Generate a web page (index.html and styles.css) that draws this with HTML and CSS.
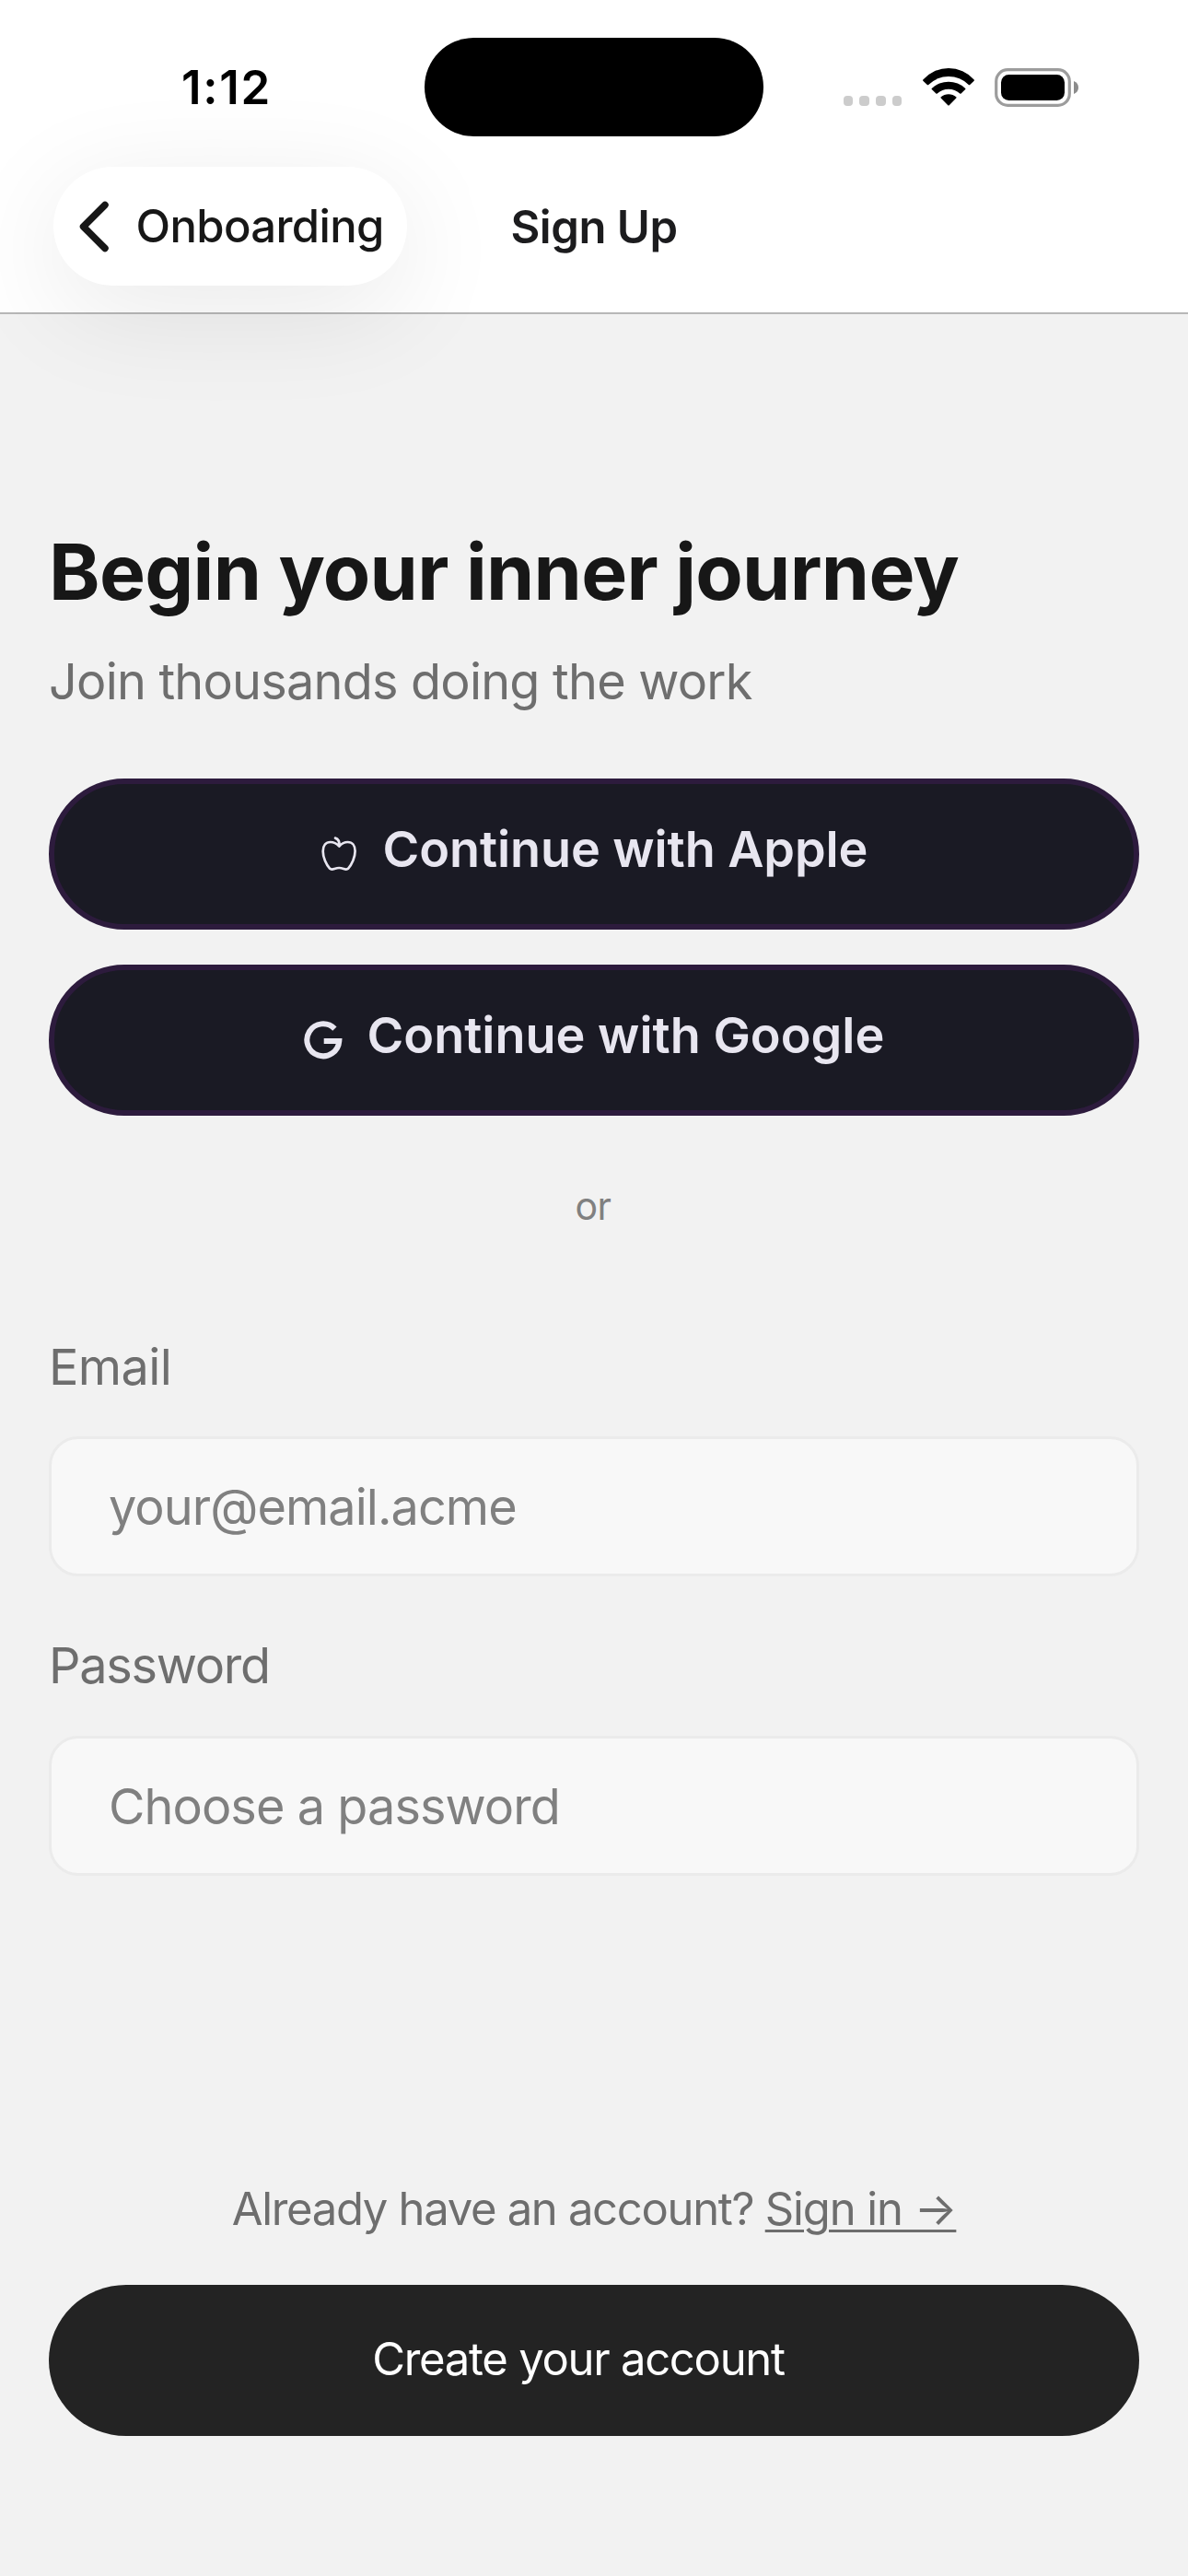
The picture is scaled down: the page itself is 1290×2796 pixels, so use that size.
FILE: index.html
```
<!DOCTYPE html>
<html lang="en">
<head>
  <meta charset="utf-8">
  <title>Sign Up</title>
  <link rel="stylesheet" href="styles.css">
</head>
<body>
  <div class="screen">
    <header class="header">
      <div class="status-bar">
        <span class="time">1:12</span>
        <div class="island"></div>
        <div class="status-icons">
          <div class="signal"><i></i><i></i><i></i><i></i></div>
          <svg class="wifi" viewBox="0 0 56 41" aria-hidden="true">
            <path d="M.3 12.5A37 37 0 0 1 55.7 12.5Q56.2 13.1 55.7 13.7L51.2 18Q50.5 18.6 49.8 18A31 31 0 0 0 6.2 18Q5.500 18.600 4.800 18L.3 13.700Q-.2 13.100 .3 12.500Z"/>
            <path d="M9.800 21.900A26.500 26.500 0 0 1 46.200 21.900Q46.800 22.500 46.200 23.100L41.600 27.500Q41 28.100 40.300 27.500A18.500 18.500 0 0 0 15.700 27.500Q15 28.100 14.400 27.500L9.800 23.100Q9.200 22.500 9.800 21.900Z"/>
            <path d="M19.700 31.300A12.500 12.500 0 0 1 36.300 31.300Q36.900 31.900 36.300 32.500L28.700 40.200Q28 40.900 27.300 40.200L19.700 32.500Q19.100 31.900 19.700 31.300Z"/>
          </svg>
          <svg class="battery" viewBox="0 0 92 42" aria-hidden="true">
            <rect x="1.700" y="1.700" width="79.600" height="38.600" rx="12.500" fill="none" stroke="#9c9c9c" stroke-width="3.200"/>
            <rect x="7" y="7" width="69" height="28" rx="8.500"/>
            <path d="M86 14Q91 16 91 21T86 28Z" fill="#8c8c8c"/>
          </svg>
        </div>
      </div>
      <nav class="nav-bar">
        <a class="back">
          <svg class="chevron" viewBox="0 0 32 56" aria-hidden="true"><path d="M28 4.500L4.500 28L28 51.500"/></svg>
          <span>Onboarding</span>
        </a>
        <h2 class="nav-title">Sign Up</h2>
      </nav>
    </header>

    <main class="content">
      <h1 class="title">Begin your inner journey</h1>
      <p class="subtitle">Join thousands doing the work</p>

      <div class="providers">
        <button class="provider apple" type="button">
          <svg viewBox="0 0 40 40" aria-hidden="true">
            <path d="M20.300 11.600C17.500 8.600 14.500 7 10.800 7C5.800 7 2.700 10.800 2.700 17C2.700 23.500 6.200 31.500 10.200 35.800C12.600 38.200 15.500 35 20.200 35S27.600 38.200 30 35.800C34.200 31.300 37.600 23.300 37.600 16.800C37.600 10.600 34.500 7 29.600 7C26 7 23 8.600 20.300 11.600ZM20.300 11.200C20.800 6.800 19.300 3.600 16 2.600"/>
          </svg>
          <span>Continue with Apple</span>
        </button>
        <button class="provider google" type="button">
          <svg viewBox="0 0 42 42" aria-hidden="true"><path d="M33.400 8.600A17.500 17.500 0 1 0 38.300 22H21.700"/></svg>
          <span>Continue with Google</span>
        </button>
      </div>

      <p class="divider">or</p>

      <form class="form">
        <div class="field">
          <label for="email">Email</label>
          <input id="email" type="email" placeholder="your@email.acme">
        </div>
        <div class="field">
          <label class="tight" for="password">Password</label>
          <input id="password" type="password" placeholder="Choose a password">
        </div>
      </form>

      <footer class="footer">
        <p class="signin">Already have an account? <a>Sign in →</a></p>
        <button class="submit" type="button">Create your account</button>
      </footer>
    </main>
  </div>
</body>
</html>
```
FILE: styles.css
```
* {
  box-sizing: border-box;
}

body {
  margin: 0;
  background: #f2f2f2;
  font-family: Inter, sans-serif;
  color: #171717;
}

h1, h2, p {
  margin: 0;
}

button, input {
  font-family: inherit;
}

.screen {
  display: flex;
  flex-direction: column;
  height: 2796px;
  overflow: hidden;
}

/* Header */
.header {
  position: relative;
  z-index: 1;
  height: 341px;
  padding-top: 41px;
  background: #fff;
  border-bottom: 2px solid #b7b7b7;
}

.status-bar {
  display: grid;
  grid-template-columns: 461px 368px 1fr;
  align-items: center;
  height: 107px;
}

.time {
  padding: 0 0 0 31px;
  text-align: center;
  font-size: 51px;
  font-weight: 600;
  line-height: 60px;
  letter-spacing: 1.700px;
  color: #000;
}

.island {
  height: 107px;
  border-radius: 54px;
  background: #000;
}

.status-icons {
  display: flex;
  align-items: center;
  height: 42px;
  padding-left: 86.500px;
}

.signal {
  display: flex;
  align-self: flex-end;
  gap: 7px;
  margin-bottom: 1px;
}

.signal i {
  width: 10.700px;
  height: 11px;
  border-radius: 4px;
  background: #ccc;
}

.wifi {
  width: 56px;
  height: 41px;
  margin-left: 22.500px;
}

.battery {
  width: 92px;
  height: 42px;
  margin-left: 22px;
}

.nav-bar {
  display: grid;
  grid-template-columns: 1fr auto 1fr;
  align-items: center;
  margin-top: 33px;
  padding: 0 58px;
}

.back {
  display: flex;
  align-items: center;
  justify-self: start;
  gap: 30px;
  width: 384px;
  height: 129px;
  padding: 1px 0 0 27.500px;
  border-radius: 65px;
  background: #fff;
  box-shadow: 0 26px 120px rgba(0, 0, 0, 0.09);
  font-size: 49px;
  font-weight: 500;
  line-height: 60px;
  letter-spacing: -0.650px;
}

.chevron {
  flex: none;
  width: 32px;
  height: 56px;
  fill: none;
  stroke: #171717;
  stroke-width: 7.500;
  stroke-linecap: round;
  stroke-linejoin: round;
}

.nav-title {
  padding-top: 2px;
  font-size: 49px;
  font-weight: 600;
  line-height: 60px;
  letter-spacing: -0.450px;
  color: #1c1c1e;
}

/* Content */
.content {
  flex: 1;
  display: flex;
  flex-direction: column;
  padding: 230px 53px 152px;
}

.title {
  font-size: 84px;
  font-weight: 700;
  line-height: 100px;
  letter-spacing: -0.700px;
}

.subtitle {
  margin-top: 36px;
  font-size: 54px;
  line-height: 66px;
  letter-spacing: -0.780px;
  color: #6e6e6e;
}

.providers {
  display: flex;
  flex-direction: column;
  gap: 38px;
  margin-top: 72px;
}

.provider {
  display: flex;
  align-items: center;
  justify-content: center;
  height: 164px;
  padding: 0;
  border: 6px solid #2d1b3d;
  border-radius: 82px;
  background: #1a1a24;
  color: #e8e6f0;
  font-size: 54px;
  font-weight: 600;
  line-height: 66px;
}

.provider span {
  padding-bottom: 10px;
}

.provider svg {
  flex: none;
  fill: none;
  stroke: #e8e6f0;
}

.apple {
  gap: 28px;
  letter-spacing: -0.090px;
}

.apple svg {
  width: 40px;
  height: 40px;
  stroke-width: 2.700;
  stroke-linecap: round;
  stroke-linejoin: round;
}

.google {
  gap: 27px;
}

.google svg {
  width: 42px;
  height: 42px;
  stroke-width: 6;
}

.divider {
  margin-top: 73px;
  padding-right: 2px;
  text-align: center;
  font-size: 41px;
  line-height: 50px;
  letter-spacing: -0.500px;
  color: #808080;
}

.form {
  display: flex;
  flex-direction: column;
  gap: 64px;
  margin-top: 117px;
}

.field {
  display: flex;
  flex-direction: column;
  gap: 42px;
}

.field + .field {
  gap: 43px;
}

.field label {
  font-size: 54px;
  line-height: 66px;
  letter-spacing: -0.600px;
  color: #6e6e6e;
}

.field .tight {
  letter-spacing: -1.260px;
}

.field input {
  height: 152px;
  padding: 0 62px;
  border: 3px solid #ebebeb;
  border-radius: 32px;
  background: #f8f8f8;
  font-size: 54px;
  letter-spacing: -0.940px;
}

.field input::placeholder {
  color: #808080;
}

.footer {
  display: flex;
  flex-direction: column;
  gap: 52px;
  margin-top: auto;
}

.signin {
  text-align: center;
  font-size: 49px;
  line-height: 60px;
  letter-spacing: -1.320px;
  color: #6e6e6e;
}

.signin a {
  letter-spacing: -1.090px;
  text-decoration: underline;
  text-decoration-thickness: 3px;
  text-underline-offset: 5px;
}

.submit {
  height: 164px;
  padding: 0 34px 3px 0;
  border: 0;
  border-radius: 84px / 82px;
  background: #232323;
  color: #fff;
  font-size: 49px;
  letter-spacing: -1.280px;
}
```
